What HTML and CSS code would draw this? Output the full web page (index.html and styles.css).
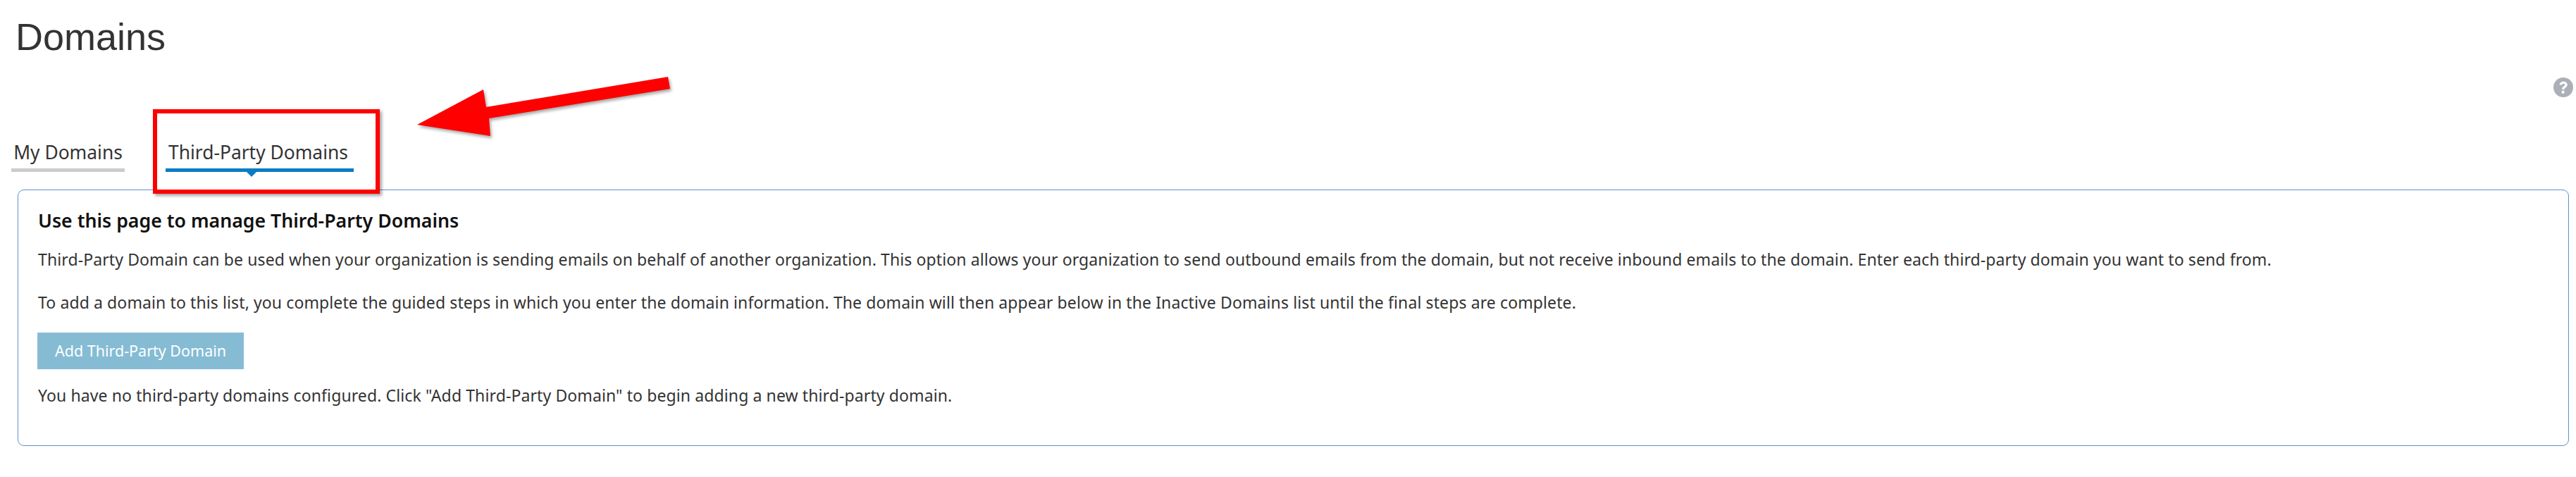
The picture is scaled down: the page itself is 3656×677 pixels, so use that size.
FILE: index.html
```html
<!DOCTYPE html>
<html lang="en">
<head>
<meta charset="utf-8">
<title>Domains</title>
<link rel="stylesheet" href="styles.css">
</head>
<body>
<main class="page">
  <h1 class="title">Domains</h1>
  <div class="help-row">
    <svg class="help" viewBox="0 0 28 28" aria-hidden="true">
      <circle cx="14" cy="14" r="14" fill="#abb0b7"/>
      <path d="M8.600 10.600c.2-3 2.500-4.800 5.600-4.800 3.200 0 5.500 1.800 5.500 4.500 0 2-1.100 3-2.500 4-1.100.8-1.600 1.300-1.600 2.600h-3.400c0-2.300.8-3.300 2.200-4.400 1-.8 1.700-1.300 1.700-2.200 0-1-.8-1.600-1.900-1.600-1.200 0-2 .7-2.200 1.900z" fill="#fff"/>
      <rect x="11.700" y="18.800" width="3.700" height="3.700" fill="#fff"/>
    </svg>
  </div>
  <nav class="tabs">
    <a class="tab">My Domains</a>
    <a class="tab tab-active">Third-Party Domains</a>
  </nav>
  <section class="card">
    <h2 class="card-title">Use this page to manage Third-Party Domains</h2>
    <p class="text first">Third-Party Domain can be used when your organization is sending emails on behalf of another organization. This option allows your organization to send outbound emails from the domain, but not receive inbound emails to the domain. Enter each third-party domain you want to send from.</p>
    <p class="text second">To add a domain to this list, you complete the guided steps in which you enter the domain information. The domain will then appear below in the Inactive Domains list until the final steps are complete.</p>
    <button class="add-btn" type="button">Add Third-Party Domain</button>
    <p class="text third">You have no third-party domains configured. Click "Add Third-Party Domain" to begin adding a new third-party domain.</p>
  </section>
</main>
<div class="callout-box"></div>
<svg class="callout-arrow" viewBox="0 0 380 100" aria-hidden="true">
  <polygon points="12,78 106,28 110,53 368,10 371,27 114,69 116,94" fill="#f00"/>
</svg>
</body>
</html>
```
FILE: styles.css
```css
* { box-sizing: border-box; }
html, body { margin: 0; padding: 0; background: #fff; }
body { width: 3656px; height: 677px; overflow: hidden; font-family: "Noto Sans", "Liberation Sans", sans-serif; color: #333; }
.page { display: flex; flex-direction: column; }
.title { margin: 0; padding: 22px 0 0 22px; height: 92px; font: 400 54px/60px "Liberation Sans", Arial, sans-serif; color: #333; }
.help-row { display: flex; justify-content: flex-end; height: 46px; padding: 18px 4px 0 0; }
.help { width: 28px; height: 28px; display: block; }
.tabs { display: flex; gap: 58px; padding-left: 16px; height: 131px; align-items: flex-start; }
.tab { display: block; position: relative; width: 161px; height: 106px; padding: 58px 0 0; border-bottom: 5px solid #ccc; font-size: 26.4px; line-height: 40px; color: #333; text-align: center; white-space: nowrap; }
.tab-active { width: 267px; padding-right: 4px; border-bottom-color: #0a7cc4; }
.tab-active::after { content: ""; position: absolute; left: 114px; bottom: -12px; border: 8px solid transparent; border-top-color: #0a7cc4; border-bottom-width: 0; }
.card { margin: 0 10px 0 25px; height: 364px; padding: 24px 28px 0; border: 1px solid #5f92cd; border-radius: 9px; }
.card-title { margin: 0; font-size: 26.700px; line-height: 38px; font-weight: 600; color: #111; }
.text { margin: 0; font-size: 23px; line-height: 30px; letter-spacing: .11px; color: #333; white-space: nowrap; }
.first { margin-top: 21px; }
.second { margin-top: 31px; }
.add-btn { display: block; margin: 28px 0 0 -1px; width: 293px; height: 52px; padding: 0; border: 0; background: #85bcd4; color: #fff; font: 400 21.500px/52px "Noto Sans", sans-serif; }
.third { margin-top: 22px; }
.callout-box { position: absolute; left: 217px; top: 155px; width: 322px; height: 120px; border: 6px solid #f00; box-shadow: 3px 3px 4px rgba(0,0,0,.35); }
.callout-arrow { position: absolute; left: 580px; top: 99px; width: 380px; height: 100px; filter: drop-shadow(2px 3px 2px rgba(0,0,0,.35)); }
```
